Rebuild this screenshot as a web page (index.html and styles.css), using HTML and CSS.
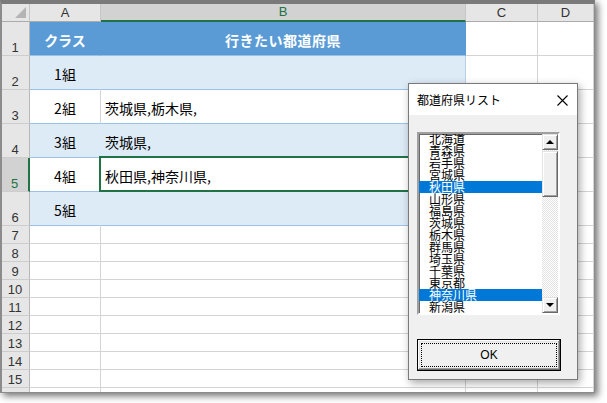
FILE: index.html
```html
<!DOCTYPE html>
<html lang="ja">
<head>
<meta charset="utf-8">
<title>都道府県リスト</title>
<link rel="stylesheet" href="styles.css">
</head>
<body>
<div class="window">
  <div class="sheet">
    <div class="corner"><span class="tri"></span></div>
    <div class="ch">A</div>
    <div class="ch sel">B</div>
    <div class="ch">C</div>
    <div class="ch">D</div>

    <div class="rh">1</div>
    <div class="c a hd">クラス</div>
    <div class="c b hd">行きたい都道府県</div>
    <div class="c"></div>
    <div class="c"></div>

    <div class="rh">2</div>
    <div class="c a band">1組</div>
    <div class="c b band"></div>
    <div class="c"></div>
    <div class="c"></div>

    <div class="rh">3</div>
    <div class="c a tw">2組</div>
    <div class="c b tw">茨城県,栃木県,</div>
    <div class="c"></div>
    <div class="c"></div>

    <div class="rh">4</div>
    <div class="c a band">3組</div>
    <div class="c b band">茨城県,</div>
    <div class="c"></div>
    <div class="c"></div>

    <div class="rh rsel">5</div>
    <div class="c a tw">4組</div>
    <div class="c b tw active">秋田県,神奈川県,</div>
    <div class="c"></div>
    <div class="c"></div>

    <div class="rh">6</div>
    <div class="c a band">5組</div>
    <div class="c b band"></div>
    <div class="c"></div>
    <div class="c"></div>

    <div class="rh">7</div><div class="c"></div><div class="c"></div><div class="c"></div><div class="c"></div>
    <div class="rh">8</div><div class="c"></div><div class="c"></div><div class="c"></div><div class="c"></div>
    <div class="rh">9</div><div class="c"></div><div class="c"></div><div class="c"></div><div class="c"></div>
    <div class="rh">10</div><div class="c"></div><div class="c"></div><div class="c"></div><div class="c"></div>
    <div class="rh">11</div><div class="c"></div><div class="c"></div><div class="c"></div><div class="c"></div>
    <div class="rh">12</div><div class="c"></div><div class="c"></div><div class="c"></div><div class="c"></div>
    <div class="rh">13</div><div class="c"></div><div class="c"></div><div class="c"></div><div class="c"></div>
    <div class="rh">14</div><div class="c"></div><div class="c"></div><div class="c"></div><div class="c"></div>
    <div class="rh">15</div><div class="c"></div><div class="c"></div><div class="c"></div><div class="c"></div>
    <div class="rh end"></div><div class="c end"></div><div class="c end"></div><div class="c end"></div><div class="c end"></div>
  </div>
</div>

<div class="dialog">
  <div class="titlebar">
    <span class="title">都道府県リスト</span>
    <svg class="close" width="11" height="11" viewBox="0 0 11 11"><path d="M0.5 0.5 L10.5 10.5 M10.5 0.5 L0.5 10.5" stroke="#000" stroke-width="1.1" fill="none"/></svg>
  </div>
  <div class="dbody">
    <div class="listbox">
      <div class="items">
        <div class="item">北海道</div>
        <div class="item">青森県</div>
        <div class="item">岩手県</div>
        <div class="item">宮城県</div>
        <div class="item on">秋田県</div>
        <div class="item">山形県</div>
        <div class="item">福島県</div>
        <div class="item">茨城県</div>
        <div class="item">栃木県</div>
        <div class="item">群馬県</div>
        <div class="item">埼玉県</div>
        <div class="item">千葉県</div>
        <div class="item">東京都</div>
        <div class="item on">神奈川県</div>
        <div class="item">新潟県</div>
      </div>
      <div class="scroll">
        <div class="sbtn"><span class="up"></span></div>
        <div class="thumb"></div>
        <div class="track"></div>
        <div class="sbtn"><span class="down"></span></div>
      </div>
    </div>
    <div class="okbtn"><span class="focus">OK</span></div>
  </div>
</div>
</body>
</html>
```

FILE: styles.css
```css
html, body {
  margin: 0;
  padding: 0;
  background: #ffffff;
}

body {
  width: 607px;
  height: 403px;
  overflow: hidden;
  font-family: "Noto Sans CJK JP", "Noto Sans", sans-serif;
}

.window {
  width: 592px;
  height: 388px;
  border-top: 4px solid #7a7a7a;
  border-left: 2px solid #8c8c8c;
  border-right: 1px solid #8c8c8c;
  border-bottom: 1px solid #8c8c8c;
  box-shadow: 3px 3px 7px rgba(0, 0, 0, 0.55);
  overflow: hidden;
  background: #fff;
}

.sheet {
  display: grid;
  grid-template-columns: 28px 71px 365px 72px 56px;
  grid-template-rows: 18px repeat(6, 34px) repeat(9, 18px) 4px;
}

.sheet > div {
  box-sizing: border-box;
}

.corner {
  background: #e6e6e6;
  border-right: 1px solid #c6c6c6;
  border-bottom: 1px solid #ababab;
  position: relative;
}

.tri {
  position: absolute;
  right: 3px;
  bottom: 3px;
  width: 0;
  height: 0;
  border-left: 11px solid transparent;
  border-bottom: 11px solid #b4b4b4;
}

.ch {
  background: #e6e6e6;
  border-right: 1px solid #c6c6c6;
  border-bottom: 1px solid #ababab;
  color: #333;
  font-family: "Liberation Sans", Arial, sans-serif;
  font-size: 13px;
  line-height: 17px;
  text-align: center;
}

.ch.sel {
  background: #d2d2d2;
  color: #217346;
  border-bottom: 2px solid #217346;
  line-height: 16px;
}

.rh {
  background: #e6e6e6;
  border-right: 1px solid #b8b8b8;
  border-bottom: 1px solid #cdcdcd;
  color: #333;
  font-family: "Liberation Sans", Arial, sans-serif;
  font-size: 13px;
  line-height: 15px;
  display: flex;
  align-items: flex-end;
  justify-content: center;
  padding-right: 1px;
}

.rh.rsel {
  background: #d2d2d2;
  color: #217346;
  border-right: 2px solid #217346;
}

.rh.end, .c.end {
  border-bottom: none;
}

.c {
  border-right: 1px solid #d4d4d4;
  border-bottom: 1px solid #d4d4d4;
  display: flex;
  align-items: center;
  font-size: 14px;
  color: #000;
  padding-top: 3px;
  white-space: nowrap;
}

.c.a {
  justify-content: center;
}

.c.b {
  padding-left: 4px;
}

.c.hd {
  background: #5b9bd5;
  color: #fff;
  font-weight: bold;
  border-right-color: #5b9bd5;
  border-bottom-color: #9bc2e6;
}

.c.b.hd {
  justify-content: center;
  padding-left: 0;
  letter-spacing: 0.5px;
}

.c.band {
  background: #ddebf7;
  border-right-color: #ddebf7;
  border-bottom-color: #9bc2e6;
}

.c.b.band {
  border-right-color: #b7d1ea;
}

.c.tw {
  border-bottom-color: #9bc2e6;
}

.c.active {
  position: relative;
}

.c.active::after {
  content: "";
  position: absolute;
  left: -2px;
  top: -2px;
  right: -1px;
  bottom: -1px;
  border: 2px solid #217346;
}

/* dialog */
.dialog {
  position: absolute;
  left: 408px;
  top: 83px;
  width: 168px;
  height: 295px;
  border: 1px solid #7a7a7a;
  background: #f0f0f0;
  box-shadow: 2px 3px 8px rgba(0, 0, 0, 0.35);
  display: flex;
  flex-direction: column;
}

.titlebar {
  height: 31px;
  background: #fff;
  display: flex;
  align-items: center;
  justify-content: space-between;
  padding: 0 9px 0 8px;
}

.title {
  font-size: 12px;
  color: #000;
}

.close {
  display: block;
  margin-top: 1px;
}

.dbody {
  flex: 1;
  padding: 17px 0 0 8px;
}

.listbox {
  width: 139px;
  height: 179px;
  border: 2px solid;
  border-color: #a0a0a0 #ffffff #ffffff #a0a0a0;
  box-shadow: inset 1px 1px 0 #696969;
  background: #fff;
  display: flex;
  overflow: hidden;
}

.items {
  width: 123px;
  padding-top: 1px;
  margin-top: -2px;
}

.item {
  height: 12px;
  line-height: 12px;
  font-size: 12px;
  padding-left: 10px;
  color: #000;
  white-space: nowrap;
}

.item.on {
  background: #0078d7;
  color: #fff;
}

.scroll {
  width: 16px;
  display: flex;
  flex-direction: column;
  background-color: #f4f4f4;
  background-image: repeating-conic-gradient(#ffffff 0 25%, #e2e2e2 0 50%);
  background-size: 2px 2px;
}

.sbtn, .thumb {
  box-sizing: border-box;
  background: #f0f0f0;
  border: 1px solid;
  border-color: #e3e3e3 #696969 #696969 #e3e3e3;
  box-shadow: inset 1px 1px 0 #fff, inset -1px -1px 0 #a0a0a0;
}

.sbtn {
  height: 16px;
  display: flex;
  align-items: center;
  justify-content: center;
}

.thumb {
  height: 46px;
  margin-top: 1px;
}

.track {
  flex: 1;
}

.up, .down {
  width: 0;
  height: 0;
  border-left: 4px solid transparent;
  border-right: 4px solid transparent;
}

.up {
  border-bottom: 4px solid #000;
}

.down {
  border-top: 4px solid #000;
}

.okbtn {
  box-sizing: border-box;
  width: 144px;
  height: 32px;
  margin-top: 24px;
  border: 1px solid #000;
  background: #f0f0f0;
  box-shadow: inset -1px -1px 0 #696969, inset 1px 1px 0 #fff, inset -2px -2px 0 #a0a0a0, inset 2px 2px 0 #e3e3e3;
  padding: 3px;
  display: flex;
}

.focus {
  flex: 1;
  border: 1px dotted #000;
  display: flex;
  align-items: center;
  justify-content: center;
  font-family: "Liberation Sans", Arial, sans-serif;
  font-size: 12px;
  color: #000;
}
```
